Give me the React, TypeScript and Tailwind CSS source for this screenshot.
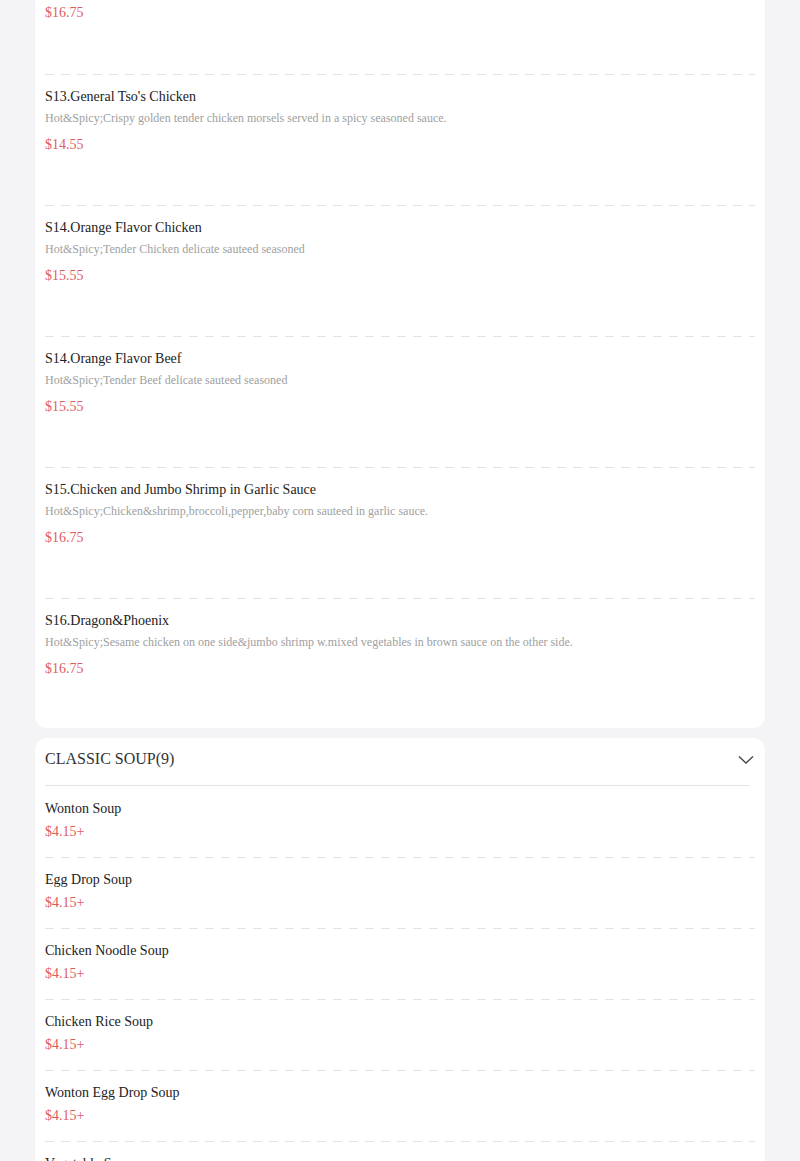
const spicy = [
  {
    name: "S13.General Tso's Chicken",
    desc: 'Hot&Spicy;Crispy golden tender chicken morsels served in a spicy seasoned sauce.',
    price: '$14.55',
  },
  {
    name: 'S14.Orange Flavor Chicken',
    desc: 'Hot&Spicy;Tender Chicken delicate sauteed seasoned',
    price: '$15.55',
  },
  {
    name: 'S14.Orange Flavor Beef',
    desc: 'Hot&Spicy;Tender Beef delicate sauteed seasoned',
    price: '$15.55',
  },
  {
    name: 'S15.Chicken and Jumbo Shrimp in Garlic Sauce',
    desc: 'Hot&Spicy;Chicken&shrimp,broccoli,pepper,baby corn sauteed in garlic sauce.',
    price: '$16.75',
  },
  {
    name: 'S16.Dragon&Phoenix',
    desc: 'Hot&Spicy;Sesame chicken on one side&jumbo shrimp w.mixed vegetables in brown sauce on the other side.',
    price: '$16.75',
  },
]

const soups = [
  'Wonton Soup',
  'Egg Drop Soup',
  'Chicken Noodle Soup',
  'Chicken Rice Soup',
  'Wonton Egg Drop Soup',
  'Vegetable Soup',
  'Hot & Sour Soup',
]

function Dashed() {
  return (
    <div className="h-px w-full bg-[linear-gradient(to_right,#e2e2e2_0_9px,transparent_9px_16px)] bg-size-[16px_1px] bg-repeat-x" />
  )
}

function Chevron() {
  return (
    <svg width="16" height="10" viewBox="0 0 16 10" fill="none" className="mt-[2px]">
      <path d="M1 1.5L8 8L15 1.5" stroke="#444" strokeWidth="1.3" />
    </svg>
  )
}

export default function App() {
  return (
    <div
      className="min-h-screen bg-[#f4f4f6] px-[35px] pb-10"
      style={{ fontFamily: '"Liberation Serif", "Times New Roman", serif' }}
    >
      <div className="rounded-b-xl bg-white px-[10px]">
        <div className="pt-[3px] pb-[51px]">
          <div className="text-[14px] leading-[20px] text-[#e05c5c]">$16.75</div>
        </div>
        {spicy.map((item, i) => (
          <div key={i}>
            <Dashed />
            <div className={i === spicy.length - 1 ? 'pt-[12px] pb-[49px]' : 'pt-[12px] pb-[50px]'}>
              <div className="text-[14px] leading-[20px] text-[#222]">{item.name}</div>
              <div className="mt-[3px] text-[12px] leading-[16px] text-[#a0a0a0]">{item.desc}</div>
              <div className="mt-[9px] text-[14px] leading-[20px] text-[#e05c5c]">{item.price}</div>
            </div>
          </div>
        ))}
      </div>

      <div className="mt-[10px] rounded-xl bg-white px-[10px]">
        <div className="flex items-center justify-between pt-[9px] pb-[14px] pr-[1px]">
          <span className="text-[16px] leading-[24px] text-[#333]">CLASSIC SOUP(9)</span>
          <Chevron />
        </div>
        <div className="mr-[5px] h-px bg-[#e4e4e4]" />
        {soups.map((name, i) => (
          <div key={i}>
            {i > 0 && <Dashed />}
            <div className={i === 0 ? 'pt-[13px] pb-[15px]' : 'pt-[12px] pb-[15px]'}>
              <div className="text-[14px] leading-[20px] text-[#222]">{name}</div>
              <div className="mt-[3px] text-[14px] leading-[20px] text-[#e05c5c]">$4.15+</div>
            </div>
          </div>
        ))}
      </div>
    </div>
  )
}
